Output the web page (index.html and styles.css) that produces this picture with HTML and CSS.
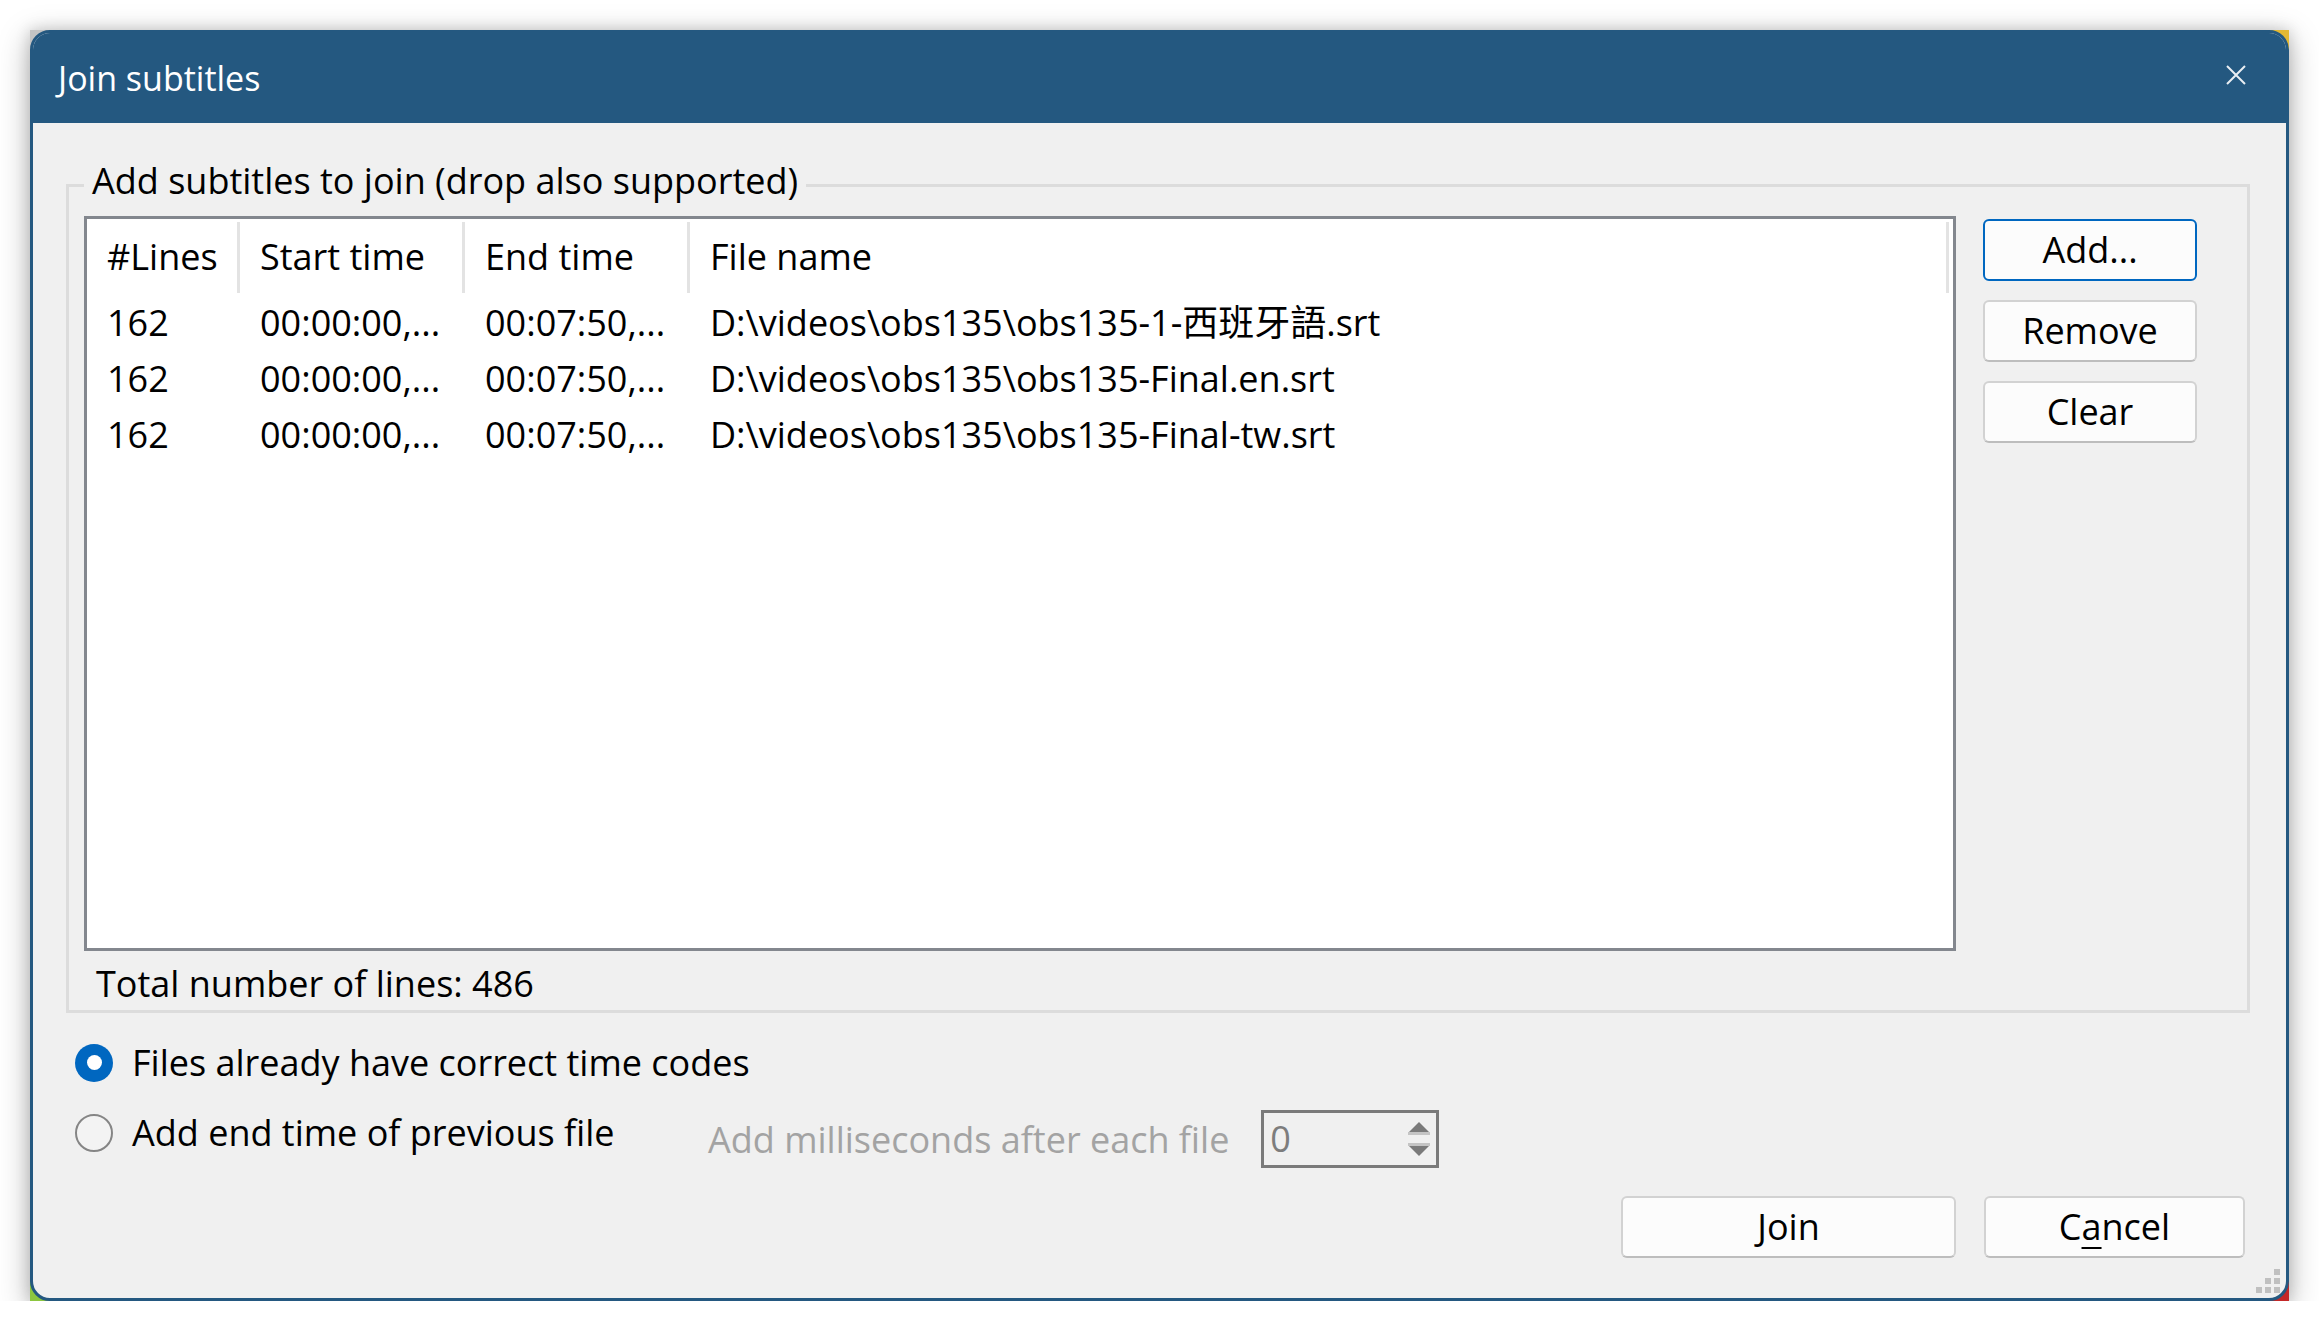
FILE: index.html
```html
<!DOCTYPE html>
<html lang="en">
<head>
<meta charset="utf-8">
<title>Join subtitles</title>
<link rel="stylesheet" href="styles.css">
</head>
<body>
<div class="desk">
  <div class="frame">
    <div class="window">
      <div class="titlebar">
        <span class="title">Join subtitles</span>
        <svg class="close" viewBox="0 0 20 20" aria-label="Close"><path d="M1 1 L19 19 M19 1 L1 19" stroke="#e9eef3" stroke-width="2" fill="none"/></svg>
      </div>
      <div class="content">
        <fieldset class="group">
          <legend class="group-label">Add subtitles to join (drop also supported)</legend>
          <div class="group-grid">
            <div class="listview">
              <div class="lv-row lv-head">
                <div class="lv-cell">#Lines</div>
                <div class="lv-cell">Start time</div>
                <div class="lv-cell">End time</div>
                <div class="lv-cell">File name</div>
              </div>
              <div class="lv-row">
                <div class="lv-cell">162</div>
                <div class="lv-cell">00:00:00,...</div>
                <div class="lv-cell">00:07:50,...</div>
                <div class="lv-cell">D:\videos\obs135\obs135-1-西班牙語.srt</div>
              </div>
              <div class="lv-row">
                <div class="lv-cell">162</div>
                <div class="lv-cell">00:00:00,...</div>
                <div class="lv-cell">00:07:50,...</div>
                <div class="lv-cell">D:\videos\obs135\obs135-Final.en.srt</div>
              </div>
              <div class="lv-row">
                <div class="lv-cell">162</div>
                <div class="lv-cell">00:00:00,...</div>
                <div class="lv-cell">00:07:50,...</div>
                <div class="lv-cell">D:\videos\obs135\obs135-Final-tw.srt</div>
              </div>
            </div>
            <div class="side">
              <button class="btn btn-focus">Add...</button>
              <button class="btn">Remove</button>
              <button class="btn">Clear</button>
            </div>
            <div class="total">Total number of lines: 486</div>
          </div>
        </fieldset>
        <div class="options">
          <div class="opt-row">
            <span class="radio radio-on"></span>
            <span>Files already have correct time codes</span>
          </div>
          <div class="opt-row row2">
            <div class="opt">
              <span class="radio radio-off"></span>
              <span>Add end time of previous file</span>
            </div>
            <div class="ms">
              <span class="ms-label">Add milliseconds after each file</span>
              <div class="spin">
                <span class="spin-val">0</span>
                <svg class="spin-arrows" viewBox="0 0 26 36">
                  <polygon points="13,1 23,11 3,11" fill="#7a7a7a"/>
                  <rect x="2" y="11" width="22" height="3" fill="#c4c4c4"/>
                  <rect x="2" y="22" width="22" height="3" fill="#c4c4c4"/>
                  <polygon points="3,25 23,25 13,35" fill="#7a7a7a"/>
                </svg>
              </div>
            </div>
          </div>
        </div>
        <div class="actions">
          <button class="btn btn-join">Join</button>
          <button class="btn btn-cancel">C<span class="acc">a</span>ncel</button>
        </div>
      </div>
      <div class="grip"><i></i><i></i><i></i><i></i><i></i><i></i></div>
    </div>
  </div>
</div>
</body>
</html>
```
FILE: styles.css
```css
html, body {
  margin: 0;
  background: #ffffff;
}
body {
  font-family: "Open Sans", "Noto Sans CJK TC", sans-serif;
  font-size: 36px;
  color: #000;
}
.desk {
  padding: 30px 0 0 30px;
}
.frame {
  width: 2259px;
  height: 1271px;
  background: conic-gradient(#e3b833 0 25%, #c42828 25% 50%, #8cc63f 50% 75%, #c4c4c4 75% 100%);
  box-shadow: 0 8px 30px rgba(0, 0, 0, 0.28), 0 0 14px rgba(0, 0, 0, 0.16);
}
.window {
  position: relative;
  box-sizing: border-box;
  width: 100%;
  height: 100%;
  border: 3px solid #245880;
  border-radius: 20px;
  background: #f0f0f0;
  overflow: hidden;
  display: flex;
  flex-direction: column;
}
.titlebar {
  flex: none;
  height: 90px;
  background: #245880;
  display: flex;
  align-items: center;
  padding: 0 40px 0 25px;
}
.title {
  flex: 1;
  color: #fff;
  font-size: 34px;
}
.close {
  width: 20px;
  height: 20px;
  margin-bottom: 6px;
}
.content {
  flex: 1;
  padding: 34px 36px 0 33px;
  display: flex;
  flex-direction: column;
}
.group {
  margin: 0;
  min-width: 0;
  border: 3px solid #dcdcdc;
  padding: 3px 50px 2px 15px;
}
.group-label {
  padding: 0 8px 8px;
  line-height: 48px;
}
.group-grid {
  display: grid;
  grid-template-columns: 1872px 214px;
  column-gap: 27px;
}
.listview {
  box-sizing: border-box;
  height: 735px;
  border: 3px solid #83878e;
  background: #fff;
}
.lv-row {
  display: grid;
  grid-template-columns: 153px 225px 225px 1259px;
  height: 56px;
  line-height: 56px;
}
.lv-head {
  height: 76px;
  line-height: 76px;
}
.lv-cell {
  padding-left: 20px;
  white-space: nowrap;
  overflow: hidden;
}
.lv-head .lv-cell {
  background: linear-gradient(#e3e3e3, #e3e3e3) right center / 3px 71px no-repeat;
}
.side {
  display: flex;
  flex-direction: column;
  gap: 19px;
  padding-top: 3px;
}
.btn {
  font: inherit;
  color: #000;
  height: 62px;
  box-sizing: border-box;
  background: #fcfcfc;
  border: 2px solid #d2d2d2;
  border-bottom-color: #bdbdbd;
  border-radius: 6px;
  padding: 0;
  line-height: 1;
}
.btn-focus {
  border-color: #0067c0;
}
.total {
  padding-left: 12px;
  margin-top: 8px;
  line-height: 49px;
}
.options {
  margin: 25px 0 0 9px;
}
.opt-row {
  display: flex;
  align-items: center;
  height: 49px;
  line-height: 49px;
}
.row2 {
  margin-top: 21px;
  align-items: flex-start;
  height: auto;
}
.opt {
  display: flex;
  align-items: center;
  width: 633px;
  height: 49px;
}
.radio {
  flex: none;
  width: 38px;
  height: 38px;
  box-sizing: border-box;
  border-radius: 50%;
  margin-right: 19px;
}
.radio-on {
  background: #0067c0;
  display: grid;
  place-items: center;
}
.radio-on::after {
  content: "";
  width: 15px;
  height: 15px;
  border-radius: 50%;
  background: #fff;
}
.radio-off {
  border: 2px solid #858585;
  background: #f3f3f3;
}
.ms {
  display: flex;
  align-items: center;
  height: 58px;
  margin-top: 2px;
}
.ms-label {
  color: #a3a3a3;
  margin-right: 32px;
}
.spin {
  box-sizing: border-box;
  width: 178px;
  height: 58px;
  border: 3px solid #7a7a7a;
  display: flex;
  align-items: center;
  padding: 0 4px 0 6px;
  color: #7d7d7d;
  line-height: 1;
}
.spin-arrows {
  margin-left: auto;
  width: 26px;
  height: 36px;
}
.actions {
  display: flex;
  justify-content: flex-end;
  gap: 28px;
  margin: 28px 5px 0 0;
}
.btn-join {
  width: 335px;
}
.btn-cancel {
  width: 261px;
}
.acc {
  text-decoration: underline;
  text-decoration-thickness: 2px;
  text-underline-offset: 7px;
}
.grip {
  position: absolute;
  right: 6px;
  bottom: 5px;
  display: grid;
  grid-template-columns: repeat(3, 6px);
  grid-template-rows: repeat(3, 6px);
  gap: 3px;
}
.grip i {
  background: #c0c0c0;
}
.grip i:nth-child(1) { grid-area: 1 / 3; }
.grip i:nth-child(2) { grid-area: 2 / 2; }
.grip i:nth-child(3) { grid-area: 2 / 3; }
.grip i:nth-child(4) { grid-area: 3 / 1; }
.grip i:nth-child(5) { grid-area: 3 / 2; }
.grip i:nth-child(6) { grid-area: 3 / 3; }
```
